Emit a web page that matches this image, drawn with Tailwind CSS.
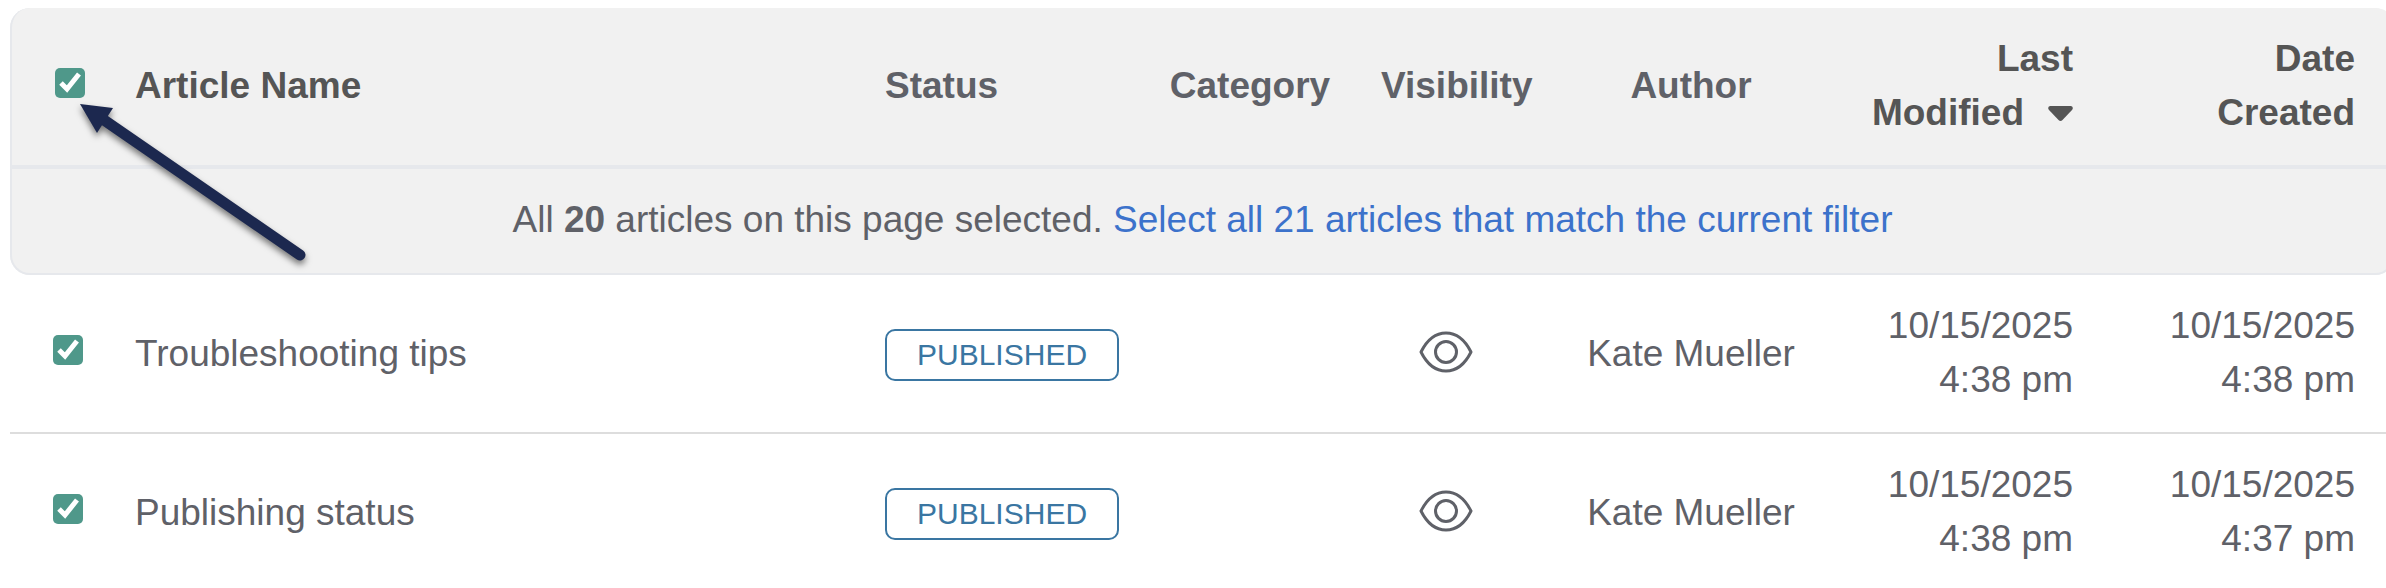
<!DOCTYPE html>
<html lang="en">
<head>
    <meta charset="UTF-8">
    <meta name="viewport" content="width=device-width, initial-scale=1.0">
    <title>Articles</title>
    <script src="https://cdn.jsdelivr.net/npm/@tailwindcss/browser@4"></script>
    <style>
        body {
            font-family: 'Liberation Sans', Arial, sans-serif;
        }
        /* White tick on the green boxes */
        input[type="checkbox"]:checked {
            background-image: url("data:image/svg+xml,%3Csvg xmlns='http://www.w3.org/2000/svg' viewBox='0 0 30 30'%3E%3Cpath d='M6 15l6 6L24 6' fill='none' stroke='white' stroke-width='5'/%3E%3C/svg%3E");
        }
    </style>
</head>
<body class="bg-white text-[#5f6168] text-[37px] leading-[54px] overflow-x-hidden">

    <svg width="0" height="0" class="absolute" aria-hidden="true">
        <symbol id="eye" viewBox="0 0 54 42">
            <path d="M2 21C8 9 17 2 27 2s19 7 25 19c-6 12-15 19-25 19S8 33 2 21z" fill="none" stroke="currentColor" stroke-width="3" stroke-linejoin="round"/>
            <circle cx="27" cy="21" r="10.500" fill="none" stroke="currentColor" stroke-width="3"/>
        </symbol>
    </svg>

    <main class="relative pt-2 pl-[10px] -mr-[9px]">
        <table class="w-full table-fixed border-separate border-spacing-0">
            <colgroup>
                <col class="w-[105px]">
                <col>
                <col class="w-[274px]">
                <col class="w-[222px]">
                <col class="w-[170px]">
                <col class="w-[320px]">
                <col class="w-[242px]">
                <col class="w-[302px]">
            </colgroup>
            <thead class="bg-[#f1f1f1]">
                <tr>
                    <th class="pt-6 pb-[25px] pl-[43px] text-left align-middle border-l-2 border-b-4 border-[#e6e8ec] rounded-tl-[20px] bg-[#f1f1f1]">
                        <input type="checkbox" checked aria-label="Select all articles" class="block appearance-none size-[30px] mb-1.5 rounded-[5px] bg-[#4f988a]">
                    </th>
                    <th class="px-5 pt-6 pb-[25px] text-left text-[#555555] border-b-4 border-[#e6e8ec]">Article Name</th>
                    <th class="px-5 pt-6 pb-[25px] text-left border-b-4 border-[#e6e8ec]">Status</th>
                    <th class="px-5 pt-6 pb-[25px] text-center border-b-4 border-[#e6e8ec]">Category</th>
                    <th class="px-5 pt-6 pb-[25px] text-center border-b-4 border-[#e6e8ec]">Visibility</th>
                    <th class="px-5 pt-6 pb-[25px] text-center border-b-4 border-[#e6e8ec]">Author</th>
                    <th class="px-5 pt-6 pb-[25px] text-right text-[#555555] border-b-4 border-[#e6e8ec]" aria-sort="descending">
                        Last<br>
                        <span class="inline-flex items-center gap-6">Modified
                            <svg class="w-[25px] h-[15px]" viewBox="0 0 25 15"><path d="M2 0h21q3 1 1 4L14.500 14q-2 2-4 0L1 4q-2-3 1-4z" fill="currentColor"/></svg>
                        </span>
                    </th>
                    <th class="pl-5 pr-10 pt-6 pb-[25px] text-right text-[#555555] border-b-4 border-[#e6e8ec] rounded-tr-[20px] bg-[#f1f1f1]">Date<br>Created</th>
                </tr>
                <tr>
                    <td colspan="8" class="pt-6 pb-[26px] text-center bg-[#f1f1f1] border-x-2 border-b-2 border-[#e6e8ec] rounded-b-[20px]">
                        All <b>20</b> articles on this page selected. <a href="#" class="text-[#3c72cb]">Select all 21 articles that match the current filter</a>
                    </td>
                </tr>
            </thead>
            <tbody>
                <tr>
                    <td class="pl-[43px] border-b-2 border-[#dddddd]">
                        <input type="checkbox" checked aria-label="Select Troubleshooting tips" class="block appearance-none size-[30px] mb-2 rounded-[5px] bg-[#4f988a]">
                    </td>
                    <td class="px-5 border-b-2 border-[#dddddd]">Troubleshooting tips</td>
                    <td class="px-5 pt-0.5 border-b-2 border-[#dddddd]">
                        <span class="block w-fit px-[30px] border-2 border-[#3a76a2] rounded-[10px] text-[30px] leading-12 text-[#3a76a2]">PUBLISHED</span>
                    </td>
                    <td class="px-5 border-b-2 border-[#dddddd]"></td>
                    <td class="px-5 border-b-2 border-[#dddddd]">
                        <svg class="block mx-auto w-[54px] h-[42px] mb-1" role="img" aria-label="Visible"><use href="#eye"/></svg>
                    </td>
                    <td class="px-5 text-center border-b-2 border-[#dddddd]">Kate Mueller</td>
                    <td class="px-5 pt-6 pb-[25px] text-right border-b-2 border-[#dddddd]">10/15/2025<br>4:38 pm</td>
                    <td class="pl-5 pr-10 pt-6 pb-[25px] text-right border-b-2 border-[#dddddd]">10/15/2025<br>4:38 pm</td>
                </tr>
                <tr>
                    <td class="pl-[43px] border-b-2 border-[#dddddd]">
                        <input type="checkbox" checked aria-label="Select Publishing status" class="block appearance-none size-[30px] mb-2 rounded-[5px] bg-[#4f988a]">
                    </td>
                    <td class="px-5 border-b-2 border-[#dddddd]">Publishing status</td>
                    <td class="px-5 pt-0.5 border-b-2 border-[#dddddd]">
                        <span class="block w-fit px-[30px] border-2 border-[#3a76a2] rounded-[10px] text-[30px] leading-12 text-[#3a76a2]">PUBLISHED</span>
                    </td>
                    <td class="px-5 border-b-2 border-[#dddddd]"></td>
                    <td class="px-5 border-b-2 border-[#dddddd]">
                        <svg class="block mx-auto w-[54px] h-[42px] mb-1" role="img" aria-label="Visible"><use href="#eye"/></svg>
                    </td>
                    <td class="px-5 text-center border-b-2 border-[#dddddd]">Kate Mueller</td>
                    <td class="px-5 pt-6 pb-[25px] text-right border-b-2 border-[#dddddd]">10/15/2025<br>4:38 pm</td>
                    <td class="pl-5 pr-10 pt-6 pb-[25px] text-right border-b-2 border-[#dddddd]">10/15/2025<br>4:37 pm</td>
                </tr>
            </tbody>
        </table>

        <!-- Arrow pointing at the select-all box -->
        <svg class="absolute left-[70px] top-[94px] w-[250px] h-[180px] drop-shadow-[0_4px_3px_rgb(0_0_0/0.5)] text-[#1c284f]" viewBox="70 94 250 180" aria-hidden="true">
            <path d="M104 120L300 255" stroke="currentColor" stroke-width="11" stroke-linecap="round"/>
            <path d="M80 104l33 4-16 25z" fill="currentColor"/>
        </svg>
    </main>

</body>
</html>
